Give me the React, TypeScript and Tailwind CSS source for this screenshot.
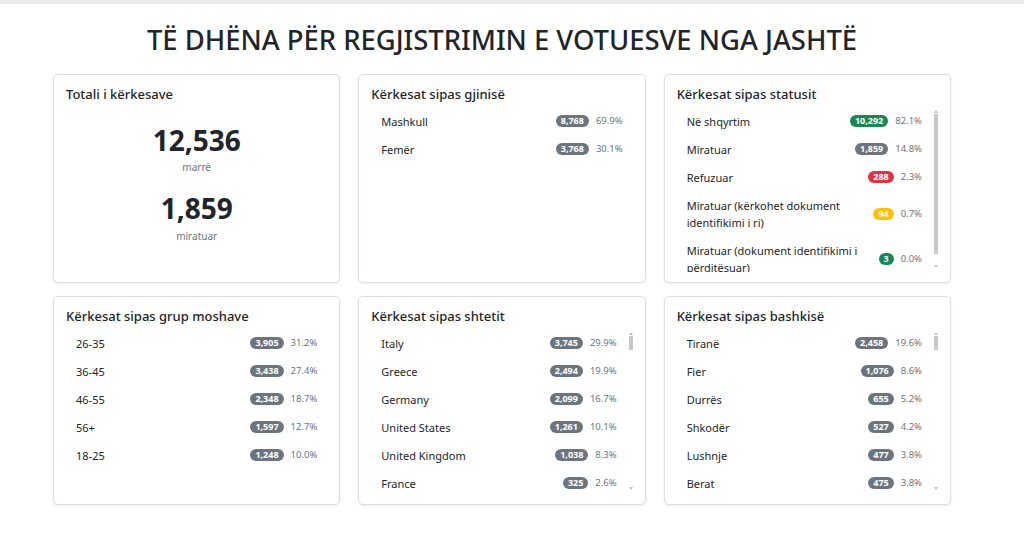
import React from 'react';

interface Row {
  label: string;
  count: string;
  pct: string;
  color?: string;
}

const gender: Row[] = [
  { label: 'Mashkull', count: '8,768', pct: '69.9%' },
  { label: 'Femër', count: '3,768', pct: '30.1%' },
];

const status: Row[] = [
  { label: 'Në shqyrtim', count: '10,292', pct: '82.1%', color: 'bg-[#198754] text-white' },
  { label: 'Miratuar', count: '1,859', pct: '14.8%' },
  { label: 'Refuzuar', count: '288', pct: '2.3%', color: 'bg-[#dc3545] text-white' },
  { label: 'Miratuar (kërkohet dokument identifikimi i ri)', count: '94', pct: '0.7%', color: 'bg-[#ffc107] text-[#fff7dd]' },
  { label: 'Miratuar (dokument identifikimi i përditësuar)', count: '3', pct: '0.0%', color: 'bg-[#198754] text-white' },
];

const ages: Row[] = [
  { label: '26-35', count: '3,905', pct: '31.2%' },
  { label: '36-45', count: '3,438', pct: '27.4%' },
  { label: '46-55', count: '2,348', pct: '18.7%' },
  { label: '56+', count: '1,597', pct: '12.7%' },
  { label: '18-25', count: '1,248', pct: '10.0%' },
];

const countries: Row[] = [
  { label: 'Italy', count: '3,745', pct: '29.9%' },
  { label: 'Greece', count: '2,494', pct: '19.9%' },
  { label: 'Germany', count: '2,099', pct: '16.7%' },
  { label: 'United States', count: '1,261', pct: '10.1%' },
  { label: 'United Kingdom', count: '1,038', pct: '8.3%' },
  { label: 'France', count: '325', pct: '2.6%' },
  { label: 'Switzerland', count: '298', pct: '2.4%' },
  { label: 'Belgium', count: '241', pct: '1.9%' },
];

const cities: Row[] = [
  { label: 'Tiranë', count: '2,458', pct: '19.6%' },
  { label: 'Fier', count: '1,076', pct: '8.6%' },
  { label: 'Durrës', count: '655', pct: '5.2%' },
  { label: 'Shkodër', count: '527', pct: '4.2%' },
  { label: 'Lushnje', count: '477', pct: '3.8%' },
  { label: 'Berat', count: '475', pct: '3.8%' },
  { label: 'Elbasan', count: '463', pct: '3.7%' },
  { label: 'Vlorë', count: '431', pct: '3.4%' },
];

function Card({ title, children }: { title: string; children: React.ReactNode }) {
  return (
    <div className="h-[209px] flex flex-col bg-white border border-[#dcdfe3] rounded-[5px] shadow-[0_1px_3px_rgba(0,0,0,0.08)] pt-[11px] pb-[10px] px-[12px]">
      <h5 className="text-[13px] leading-[16px] font-medium text-[#212529] mb-[5px]">{title}</h5>
      {children}
    </div>
  );
}

function FakeScrollbar({ thumb }: { thumb: string }) {
  return (
    <div className="w-[6px] shrink-0 flex flex-col items-end pt-[3px] pb-[4px]">
      <svg width="4" height="3" viewBox="0 0 4 3">
        <path d="M2 0 L4 3 L0 3 Z" fill="#c4c4c4" />
      </svg>
      <div className="flex-1 w-[4px] pt-[1px]">
        <div className={`w-[4px] bg-[#c8c8c8] ${thumb}`} />
      </div>
      <svg width="4" height="3" viewBox="0 0 4 3">
        <path d="M0 0 L4 0 L2 3 Z" fill="#c4c4c4" />
      </svg>
    </div>
  );
}

function List({ rows, thumb }: { rows: Row[]; thumb?: string }) {
  return (
    <div className="flex-1 min-h-0 flex">
      <ul className="flex-1 min-w-0 overflow-hidden">
        {rows.map((r) => (
          <li key={r.label} className="flex items-center px-[10px] py-[5.5px]">
            <span className="flex-1 min-w-0 text-[11px] leading-[17px] text-[#212529]">{r.label}</span>
            <span className="shrink-0 ml-[8px] flex items-center">
              <span className={`rounded-full px-[5px] text-[9px] leading-[12px] font-bold ${r.color || 'bg-[#6c757d] text-white'}`}>
                {r.count}
              </span>
              <span className="ml-[7px] text-[9.5px] leading-[14px] text-[#6c757d]">{r.pct}</span>
            </span>
          </li>
        ))}
      </ul>
      {thumb && <FakeScrollbar thumb={thumb} />}
    </div>
  );
}

export default function App() {
  return (
    <div className="min-h-screen bg-white font-['Noto_Sans',sans-serif] text-[#212529]">
      <div className="h-[4px] bg-[#ebebeb]" />
      <div className="w-[1004px]">
        <h1 className="text-center text-[27.4px] leading-[34px] font-medium mt-[19px] mb-[17px]">
          TË DHËNA PËR REGJISTRIMIN E VOTUESVE NGA JASHTË
        </h1>
        <div className="w-[898px] mx-auto grid grid-cols-3 gap-x-[18px] gap-y-[13px]">
          <Card title="Totali i kërkesave">
            <div className="flex flex-col items-center">
              <div className="mt-[16px] text-[28px] leading-[34px] font-bold">12,536</div>
              <div className="mt-[3px] text-[10px] leading-[14px] text-[#6c757d]">marrë</div>
              <div className="mt-[17px] text-[28px] leading-[34px] font-bold">1,859</div>
              <div className="mt-[4px] text-[10px] leading-[14px] text-[#6c757d]">miratuar</div>
            </div>
          </Card>
          <Card title="Kërkesat sipas gjinisë">
            <List rows={gender} />
          </Card>
          <Card title="Kërkesat sipas statusit">
            <List rows={status} thumb="h-[140px]" />
          </Card>
          <Card title="Kërkesat sipas grup moshave">
            <List rows={ages} />
          </Card>
          <Card title="Kërkesat sipas shtetit">
            <List rows={countries} thumb="h-[14px]" />
          </Card>
          <Card title="Kërkesat sipas bashkisë">
            <List rows={cities} thumb="h-[14px]" />
          </Card>
        </div>
      </div>
    </div>
  );
}
